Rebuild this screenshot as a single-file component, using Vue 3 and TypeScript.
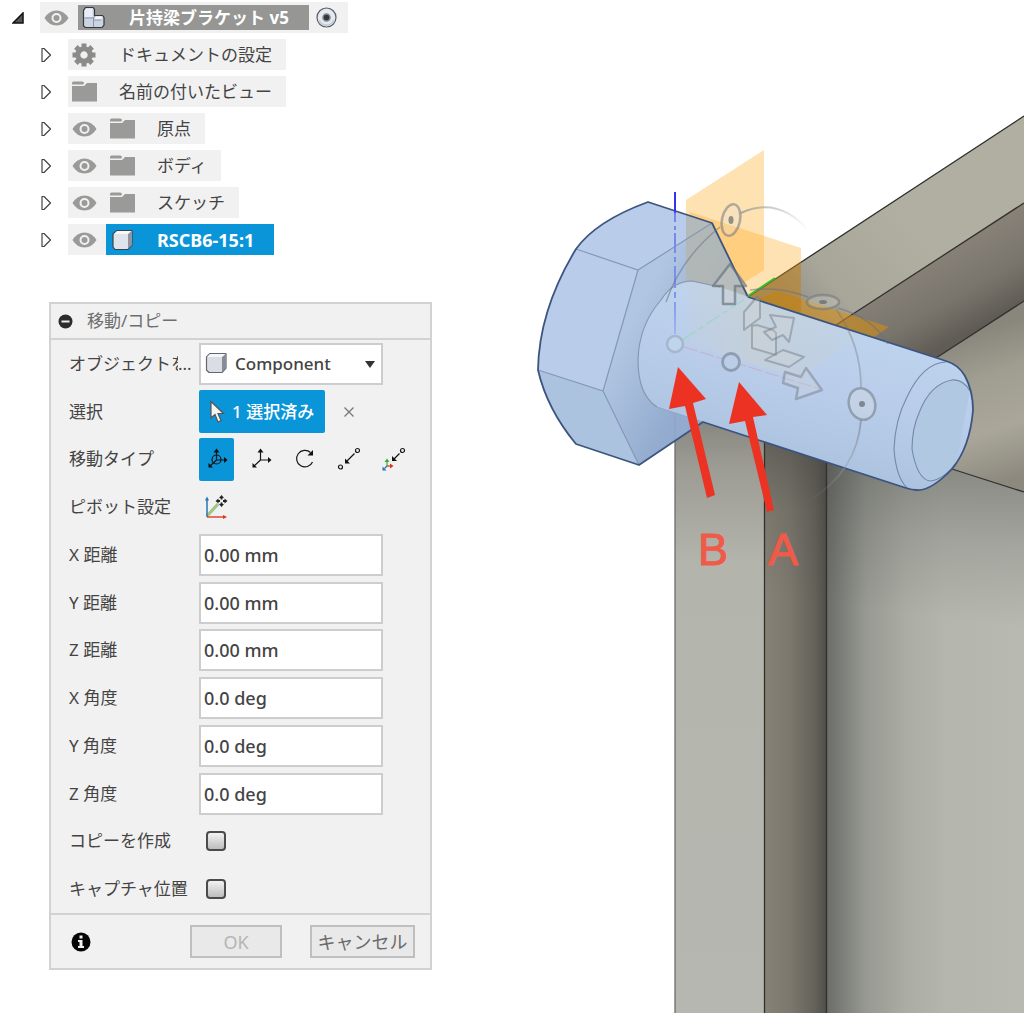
<script setup lang="ts">
import { ref } from 'vue'

type Icon = 'gear' | 'folder' | 'body'

interface TreeNode {
  label: string
  icon: Icon
  eye: boolean
  selected?: boolean
}

interface Field {
  id: string
  label: string
  value: string
}

const nodes: TreeNode[] = [
  { label: 'ドキュメントの設定', icon: 'gear', eye: false },
  { label: '名前の付いたビュー', icon: 'folder', eye: false },
  { label: '原点', icon: 'folder', eye: true },
  { label: 'ボディ', icon: 'folder', eye: true },
  { label: 'スケッチ', icon: 'folder', eye: true },
  { label: 'RSCB6-15:1', icon: 'body', eye: true, selected: true },
]

const fields = ref<Field[]>([
  { id: 'dx', label: 'X 距離', value: '0.00 mm' },
  { id: 'dy', label: 'Y 距離', value: '0.00 mm' },
  { id: 'dz', label: 'Z 距離', value: '0.00 mm' },
  { id: 'ax', label: 'X 角度', value: '0.0 deg' },
  { id: 'ay', label: 'Y 角度', value: '0.0 deg' },
  { id: 'az', label: 'Z 角度', value: '0.0 deg' },
])

const checks = ref([
  { id: 'copy', label: 'コピーを作成', on: false },
  { id: 'capture', label: 'キャプチャ位置', on: false },
])

const moveTypes = ['free', 'translate', 'rotate', 'point', 'position']
const moveType = ref('free')
const teeth = [0, 45, 90, 135, 180, 225, 270, 315]
</script>

<template>
  <main class="workspace">
    <div class="side">
      <nav class="tree">
        <div class="row root">
          <button class="toggle" aria-label="collapse">
            <svg width="12" height="12" viewBox="0 0 12 12"><path d="M11 1V11H1Z" fill="#555" stroke="#111" stroke-width="1.500" /></svg>
          </button>
          <div class="chip">
            <span class="slot">
              <svg width="25" height="18" viewBox="0 0 25 18"><path d="M0.500 9Q5 1.500 12.500 1.500T24.500 9Q20 16.500 12.500 16.500T0.500 9Z" fill="#9a9a99" /><circle cx="12.500" cy="9" r="4" fill="#9a9a99" stroke="#f1f1f1" stroke-width="2" /></svg>
            </span>
            <div class="root-name">
              <span class="slot">
                <svg width="23" height="23" viewBox="0 0 23 23"><path d="M3.500 1.500H11L12.500 3.500V9.500H20.500L22 11.500V19L20 21.500H3.500L1.500 20V4.500Z" fill="#ccd4e3" stroke="#33383f" stroke-width="1.200" /><path d="M2.500 5L4 2.500H10.500V11H2.500Z" fill="#e9edf6" /><path d="M12.500 13.500L14 10.500H20.500L19 13.500Z" fill="#f4f6fb" /><path d="M11.500 12V21M2.500 12H11L13 10M12 14H19" fill="none" stroke="#8c95a6" stroke-width="1" /></svg>
              </span>
              <span class="name">片持梁ブラケット v5</span>
            </div>
            <button class="radio" aria-label="activate">
              <svg width="21" height="21" viewBox="0 0 21 21"><circle cx="10.500" cy="10.500" r="9.500" fill="#e4e8f1" stroke="#5b5e63" stroke-width="1.200" /><path d="M3 13A8 8 0 0 0 18 13" fill="none" stroke="#c5ccda" stroke-width="2" /><circle cx="10.500" cy="10.500" r="3.500" fill="#33363b" stroke="#7f848c" stroke-width="1.500" /></svg>
            </button>
          </div>
        </div>

        <div v-for="n in nodes" :key="n.label" class="row">
          <button class="toggle" aria-label="expand">
            <svg width="12" height="16" viewBox="0 0 12 16"><path d="M2 1.500H4L10.500 8L4 14.500H2Z" fill="#fff" stroke="#444" stroke-width="1.200" stroke-linejoin="round" /></svg>
          </button>
          <div class="chip">
            <span v-if="n.eye" class="slot">
              <svg width="25" height="18" viewBox="0 0 25 18"><path d="M0.500 9Q5 1.500 12.500 1.500T24.500 9Q20 16.500 12.500 16.500T0.500 9Z" fill="#9a9a99" /><circle cx="12.500" cy="9" r="4" fill="#9a9a99" stroke="#f1f1f1" stroke-width="2" /></svg>
            </span>
            <div class="item" :class="{ selected: n.selected }">
              <span class="slot">
                <svg v-if="n.icon === 'gear'" width="24" height="24" viewBox="-12 -12 24 24">
                  <rect v-for="a in teeth" :key="a" x="-2.500" y="-11.500" width="5" height="6" fill="#8b8b8a" :transform="`rotate(${a})`" />
                  <circle r="6.200" fill="none" stroke="#8b8b8a" stroke-width="5" />
                </svg>
                <svg v-else-if="n.icon === 'folder'" width="25" height="21" viewBox="0 0 25 21"><path d="M0 2Q0 0.500 1.500 0.500H10Q12 0.500 12 2T10.500 3.500H0Z" fill="#9a9a99" /><path d="M0 5H12L15 2H25V20.500H0Z" fill="#9a9a99" /></svg>
                <svg v-else width="25" height="22" viewBox="0 0 25 22"><path d="M7 1.500H22V16L18 20.500H5L3 18V5Z" fill="#dfe3ec" stroke="#3d4248" stroke-width="1.200" stroke-linejoin="round" /><path d="M18 5L22 1.500V16L18 20Z" fill="#8f96a3" /><path d="M4 5L7 2H21L18 5Z" fill="#f7f8fb" /></svg>
              </span>
              <span class="name">{{ n.label }}</span>
            </div>
          </div>
        </div>
      </nav>

      <form class="panel" @submit.prevent>
        <header class="head">
          <svg width="15" height="15" viewBox="0 0 15 15"><circle cx="7.500" cy="7.500" r="7" fill="#2c2c2c" /><rect x="3.500" y="6.500" width="8" height="2" fill="#eee" /></svg>
          <h1>移動/コピー</h1>
        </header>

        <div class="body">
          <div class="line">
            <label class="label cut" for="target"><span class="clip">オブジェクトを</span><span>...</span></label>
            <div class="select">
              <select id="target"><option>Component</option></select>
              <svg class="select-icon" width="23" height="22" viewBox="0 0 23 22"><path d="M5 1.500H21V16L17 20.500H4L1.500 18V5Z" fill="#dadde3" stroke="#63676e" stroke-width="1.200" stroke-linejoin="round" /><path d="M17 5L21 1.500V16L17 20Z" fill="#878d97" /><path d="M2 5L5 2H20L17 5Z" fill="#f5f6f8" /></svg>
              <svg class="select-arrow" width="10" height="8" viewBox="0 0 10 8"><path d="M0 1H10L5 8Z" fill="#333" /></svg>
            </div>
          </div>

          <div class="line">
            <span class="label">選択</span>
            <button class="picked" type="button">
              <svg width="17" height="24" viewBox="0 0 17 24"><path d="M2 1.500V18L6 14.500L9 22L12 20.500L9 13.500H14.500Z" fill="#f4f4f4" stroke="#555" stroke-width="1.200" /></svg>
              <span>1 選択済み</span>
            </button>
            <button class="clear" type="button" aria-label="clear">
              <svg width="12" height="12" viewBox="0 0 12 12"><path d="M1.500 1.500L10.500 10.500M10.500 1.500L1.500 10.500" stroke="#777" stroke-width="1.300" /></svg>
            </button>
          </div>

          <div class="line">
            <span class="label">移動タイプ</span>
            <div class="types">
              <button v-for="t in moveTypes" :key="t" type="button" class="type" :class="{ on: t === moveType }" :aria-label="t" @click="moveType = t">
                <svg width="26" height="26" viewBox="0 0 26 26" fill="none" stroke="#161616" stroke-width="1.200">
                  <template v-if="t === 'free' || t === 'translate'">
                    <path d="M12.500 14V5M12.500 14H20M12.500 14L6 20" />
                    <path d="M12.500 2.500L15.500 6.500H9.500ZM23.500 14L20 11V17ZM4.500 17V21.500H9Z" fill="#111" stroke="none" />
                    <circle v-if="t === 'free'" cx="12.500" cy="13.500" r="4.500" />
                  </template>
                  <template v-else-if="t === 'rotate'">
                    <path d="M18.500 6.500A8.300 8.300 0 1 0 20.500 16" />
                    <path d="M21 4V9.500H15.500Z" fill="#111" stroke="none" />
                  </template>
                  <template v-else-if="t === 'point'">
                    <circle cx="21.500" cy="4.500" r="2" /><circle cx="4.500" cy="21" r="2" />
                    <path d="M18.500 7.500L11 15" /><path d="M9 12.500V17.500H14Z" fill="#111" stroke="none" />
                  </template>
                  <template v-else>
                    <circle cx="22.500" cy="4.500" r="2" /><path d="M19.500 7.500L14 13" />
                    <path d="M12 10V15H17Z" fill="#111" stroke="none" />
                    <path d="M7 20V15" stroke="#39b034" /><path d="M7 12.500L9.500 16H4.500Z" fill="#39b034" stroke="none" />
                    <path d="M7 20H11" stroke="#e0311f" /><path d="M13.500 20L10 17.500V22.500Z" fill="#e0311f" stroke="none" />
                    <path d="M7 20L4.500 22.500" stroke="#2774b5" /><path d="M2.500 20.500V24.500H6.500Z" fill="#2774b5" stroke="none" />
                  </template>
                </svg>
              </button>
            </div>
          </div>

          <div class="line">
            <span class="label">ピボット設定</span>
            <button class="pivot" type="button" aria-label="pivot">
              <svg width="26" height="26" viewBox="0 0 26 26" fill="none">
                <path d="M4 22L15 10" stroke="#aaa" stroke-width="3" /><path d="M4 22L15 10" stroke="#8ce05c" stroke-width="1.500" />
                <path d="M4 23V6" stroke="#2774b5" stroke-width="1.500" /><path d="M4 2.500L6 6.500H2Z" fill="#2774b5" />
                <path d="M4 23H20" stroke="#d94a35" stroke-width="1.500" /><path d="M24 23L20 21V25Z" fill="#e0311f" />
                <path d="M18.500 1L21 4H19.500V5.500H17.500V4H16ZM18.500 13L21 10H19.500V8.500H17.500V10H16ZM12.500 7L15.500 4.500V6H17V8H15.500V9.500ZM24.500 7L21.500 4.500V6H20V8H21.500V9.500Z" fill="#222" />
              </svg>
            </button>
          </div>

          <div v-for="f in fields" :key="f.id" class="line">
            <label class="label" :for="f.id">{{ f.label }}</label>
            <input :id="f.id" v-model="f.value" class="value" type="text">
          </div>

          <div v-for="c in checks" :key="c.id" class="line">
            <label class="label" :for="c.id">{{ c.label }}</label>
            <input :id="c.id" v-model="c.on" class="check" type="checkbox">
          </div>
        </div>

        <footer class="foot">
          <svg width="20" height="20" viewBox="0 0 20 20"><circle cx="10" cy="10" r="9.500" fill="#050505" /><path d="M8.500 3.500H11.500V6.500H8.500ZM7 8H11.500V14H13V16H7V14H8.500V10H7Z" fill="#f1f1f1" /></svg>
          <button class="ok" type="button" disabled>OK</button>
          <button class="cancel" type="button">キャンセル</button>
        </footer>
      </form>
    </div>

    <svg class="canvas" viewBox="532 0 492 1013">
      <defs>
        <linearGradient id="post" x1="0" y1="420" x2="0" y2="1013" gradientUnits="userSpaceOnUse">
          <stop offset="0" stop-color="#88877f" /><stop offset=".08" stop-color="#9c9c94" /><stop offset=".24" stop-color="#b3b4ac" /><stop offset="1" stop-color="#b6b7b0" />
        </linearGradient>
        <linearGradient id="inner">
          <stop offset="0" stop-color="#878276" /><stop offset=".4" stop-color="#7c786e" /><stop offset=".8" stop-color="#65625a" /><stop offset="1" stop-color="#4f4e49" />
        </linearGradient>
        <linearGradient id="wall" x1="827" x2="1024" y1="0" y2="0" gradientUnits="userSpaceOnUse">
          <stop offset="0" stop-color="#6c6d69" /><stop offset=".08" stop-color="#7d7f7a" /><stop offset=".2" stop-color="#979992" /><stop offset=".4" stop-color="#abaca4" /><stop offset=".6" stop-color="#b4b5ad" /><stop offset="1" stop-color="#b8b9b1" />
        </linearGradient>
        <linearGradient id="shade" x1="0" y1="420" x2="0" y2="600" gradientUnits="userSpaceOnUse">
          <stop offset="0" stop-color="#3f403d" stop-opacity=".6" /><stop offset=".5" stop-color="#3f403d" stop-opacity=".15" /><stop offset="1" stop-color="#3f403d" stop-opacity="0" />
        </linearGradient>
        <linearGradient id="wallshade" x1="890" y1="450" x2="870" y2="610" gradientUnits="userSpaceOnUse">
          <stop offset="0" stop-color="#3f403d" stop-opacity=".4" /><stop offset=".5" stop-color="#3f403d" stop-opacity=".16" /><stop offset="1" stop-color="#3f403d" stop-opacity="0" />
        </linearGradient>
        <linearGradient id="top" x1="790" y1="300" x2="900" y2="210" gradientUnits="userSpaceOnUse">
          <stop offset="0" stop-color="#96938a" /><stop offset=".3" stop-color="#a8a699" /><stop offset="1" stop-color="#b1afa2" />
        </linearGradient>
        <linearGradient id="under" x1="900" y1="265" x2="945" y2="345" gradientUnits="userSpaceOnUse">
          <stop offset="0" stop-color="#8a847b" /><stop offset=".6" stop-color="#7a756c" /><stop offset="1" stop-color="#605c55" />
        </linearGradient>
        <linearGradient id="back" x1="965" y1="335" x2="1010" y2="480" gradientUnits="userSpaceOnUse">
          <stop offset="0" stop-color="#89867c" /><stop offset=".3" stop-color="#a09d91" /><stop offset=".65" stop-color="#aaa79a" /><stop offset="1" stop-color="#8d897f" />
        </linearGradient>
        <linearGradient id="neck" x1="620" y1="340" x2="695" y2="380" gradientUnits="userSpaceOnUse">
          <stop offset="0" stop-color="#b1c6e2" /><stop offset="1" stop-color="#92abce" />
        </linearGradient>
        <linearGradient id="shaft" x1="830" y1="320" x2="795" y2="455" gradientUnits="userSpaceOnUse">
          <stop offset="0" stop-color="#bed3ec" /><stop offset=".5" stop-color="#b9cdeb" /><stop offset="1" stop-color="#adc4e0" />
        </linearGradient>
        <linearGradient id="haze" x1="690" y1="0" x2="850" y2="0" gradientUnits="userSpaceOnUse">
          <stop offset="0" stop-color="#cdd0c8" stop-opacity=".15" /><stop offset=".4" stop-color="#cdd0c8" stop-opacity=".5" /><stop offset="1" stop-color="#cdd0c8" stop-opacity=".15" />
        </linearGradient>
        <linearGradient id="axis" x1="0" y1="192" x2="0" y2="340" gradientUnits="userSpaceOnUse">
          <stop offset="0" stop-color="#3434ed" /><stop offset=".13" stop-color="#3434ed" /><stop offset=".15" stop-color="#7485ef" /><stop offset=".65" stop-color="#7c8ff0" /><stop offset="1" stop-color="#a5b9f0" />
        </linearGradient>
        <linearGradient id="fade" x1="740" y1="205" x2="808" y2="230" gradientUnits="userSpaceOnUse">
          <stop offset="0" stop-color="#aaa7a0" /><stop offset="1" stop-color="#aaa7a0" stop-opacity="0" />
        </linearGradient>
        <linearGradient id="sweep" x1="0" y1="420" x2="0" y2="502" gradientUnits="userSpaceOnUse">
          <stop offset="0" stop-color="#8e9cb0" /><stop offset="1" stop-color="#9a9a94" stop-opacity="0" />
        </linearGradient>
      </defs>

      <!-- bracket -->
      <path d="M675 415H765V1013H675Z" fill="url(#post)" />
      <path d="M764 430H827V1013H764Z" fill="url(#inner)" />
      <path d="M764 430H827V600H764Z" fill="url(#shade)" />
      <path d="M827 440L952 469L1024 492V1013H827Z" fill="url(#wall)" />
      <path d="M827 440L952 469L1024 492V640H827Z" fill="url(#wallshade)" />
      <path d="M748 297L1024 116V203L836 326Z" fill="url(#top)" />
      <path d="M836 325L1024 203V301L936 358Z" fill="url(#under)" />
      <path d="M936 358L1024 301V492L952 469Z" fill="url(#back)" />
      <path d="M748 297L1024 116M836 325L1024 203M936 358L1024 301M952 469L1024 492M764.500 430V1013M826.500 455V1013" fill="none" stroke="#30302d" stroke-width="1.300" />
      <path d="M675 420V1013" stroke="#6c6d69" stroke-width="1.300" />

      <!-- origin planes behind the bolt -->
      <path d="M686 200L764 150V270L686 320Z" fill="#ffa615" opacity=".33" />
      <path d="M690 212L801 248V360L690 320Z" fill="#ffa615" opacity=".32" />
      <path d="M777 291L889 327L832 365L748 330V304Z" fill="#d88e0c" opacity=".55" />
      <path d="M748 297L801 262V314Z" fill="#97670f" opacity=".3" />

      <!-- bolt -->
      <path d="M648 202L712 223L748 297L946 361Q959 365 965 376Q973 391 973 410Q970 447 952 469Q931 491 917 490Q912 490 906 488L703 422L639 465L576 444Q547 409 538 370Q539 310 576 249Q596 221 648 202Z" fill="#b9cdea" />
      <path d="M638 270L712 223L748 297L703 422L639 465L603 391Z" fill="url(#neck)" />
      <path d="M538 370L603 391L639 465L576 444Q547 409 538 370Z" fill="#acc3df" />
      <path d="M686 205V282L748 297L712 223L686 214Z" fill="#b3b6b0" opacity=".85" />
      <path d="M661 300Q673 281 692 281Q720 286 748 297L946 361Q973 370 973 410Q968 455 940 480Q925 493 906 488L657 407Q638 395 638 360Q639 325 661 300Z" fill="url(#shaft)" />
      <path d="M686 281Q720 284 748 297L862 334L800 378L690 345Z" fill="url(#haze)" />
      <path d="M576 249L638 270L712 223M638 270L603 391M538 370L603 391L639 465" fill="none" stroke="#8598b5" stroke-width="1.200" />
      <path d="M657 407Q638 395 638 360Q639 325 661 300Q673 281 692 281L720 287" fill="none" stroke="#8394ae" stroke-width="1.100" />
      <path d="M657 407L703 422M675 413V441" fill="none" stroke="#8ba0bf" stroke-width="1" opacity=".7" />
      <path d="M946 362Q923 363 907 397Q895 420 894 449Q896 477 907 488" fill="none" stroke="#7388ab" stroke-width="1.100" />
      <path d="M970 391Q963 379 952 380Q930 384 919 413Q912 429 912 449Q917 479 930 481Q943 480 956 463" fill="#b1c8e3" stroke="#7388ab" stroke-width="1.100" />
      <path d="M648 202L712 223L748 297L946 361Q959 365 965 376Q973 391 973 410Q970 447 952 469Q931 491 917 490Q912 490 906 488L703 422L639 465L576 444Q547 409 538 370Q539 310 576 249Q596 221 648 202Z" fill="none" stroke="#3c5480" stroke-width="1.800" stroke-linejoin="round" />

      <!-- axes -->
      <path d="M675 192V222M675 226V230M675 233V253M675 257V262M675 266V288M675 292V298M675 302V334" stroke="url(#axis)" stroke-width="2" fill="none" />
      <path d="M748 296L775 278" stroke="#35c22d" stroke-width="2" />
      <path d="M682 340L748 297" stroke="#a3d5cb" stroke-width="1.500" stroke-dasharray="16 4 5 4" />
      <path d="M684 347L820 389" stroke="#c8b0c2" stroke-width="1" stroke-dasharray="14 3" />

      <!-- move gizmo -->
      <g fill="none" stroke="#66707b" stroke-opacity=".5" stroke-width="2">
        <path d="M741 213Q778 196 808 230" stroke="url(#fade)" stroke-opacity="1" />
        <path d="M720 227Q681 258 666 302" stroke-width="1.500" />
        <path d="M750 290Q780 286 808 297M838 308Q873 318 888 344" stroke-width="1.500" />
        <path d="M836 309Q861 345 861 387" stroke-width="1.800" stroke-opacity=".35" />
        <path d="M861 420Q857 471 810 500" stroke="url(#sweep)" stroke-opacity="1" stroke-width="1.800" />
        <g fill="#e5e3d8" fill-opacity=".25" stroke-width="2.500">
          <ellipse cx="731" cy="220" rx="9" ry="16" transform="rotate(12 731 220)" />
          <ellipse cx="823" cy="302" rx="16" ry="7" />
          <ellipse cx="862" cy="404" rx="13" ry="16" transform="rotate(-18 862 404)" />
        </g>
        <g fill="#d2d5d4" fill-opacity=".25" stroke-opacity=".42" stroke-linejoin="round">
          <path d="M730 264L746 286H735V304H723V286H713Z" stroke-width="2.500" stroke-opacity=".65" />
          <path d="M744 312L757 297L760 299V318L744 330Z" />
          <path d="M752 326L757 325L773 330L776 333V355L752 348Z" />
          <path d="M770 315L794 318L789 342L783 335L772 340L764 332L776 327Z" />
          <path d="M765 360L783 350L804 357L789 367Z" />
          <path d="M822 390L796 399L798 388L783 383L785 372L801 377L806 368Z" stroke-width="2.500" />
        </g>
        <circle cx="675" cy="344" r="8" fill="#c0d4ec" stroke="#a5b6ce" stroke-opacity="1" stroke-width="2.500" />
        <circle cx="731" cy="362" r="8.500" fill="#bbcde7" stroke="#8f9db2" stroke-opacity="1" stroke-width="2.800" />
      </g>
      <g fill="#59626c" opacity=".65">
        <ellipse cx="731" cy="220" rx="2.500" ry="4" /><ellipse cx="823" cy="302" rx="4" ry="2" /><circle cx="862" cy="404" r="3" />
      </g>

      <!-- annotations -->
      <g fill="#ec3323">
        <path d="M678 367L706 399L693 403L715 495L707 498L685 406L669 409Z" />
        <path d="M739 382L767 415L753 417L774 510L767 512L745 421L729 424Z" />
      </g>
      <text class="note" x="698" y="565">B</text>
      <text class="note" x="768" y="565">A</text>
    </svg>
  </main>
</template>

<style>
body {
  margin: 0;
  background: #fff;
}
</style>

<style scoped>
.workspace {
  display: grid;
  grid-template-columns: 532px minmax(0, 1fr);
  align-items: start;
  font-family: "Noto Sans", "Noto Sans CJK JP", sans-serif;
  font-size: 17px;
  line-height: 24px;
  color: #444;
}
button, input, select {
  font: inherit;
  color: inherit;
  margin: 0;
  padding: 0;
  border: 0;
  background: none;
  border-radius: 0;
  box-sizing: border-box;
}
svg {
  display: block;
}
.canvas {
  width: 100%;
  height: auto;
}
.note {
  font-family: "Liberation Sans", sans-serif;
  font-size: 45px;
  fill: #ef5a49;
  stroke: #ef5a49;
  stroke-width: 1px;
}

.tree {
  display: flex;
  flex-direction: column;
  gap: 6px;
  padding-top: 2px;
}
.row {
  display: flex;
  height: 31px;
  padding-left: 40px;
}
.root {
  padding-left: 12px;
}
.toggle {
  width: 28px;
  display: flex;
  align-items: center;
}
.chip {
  display: flex;
  align-items: center;
  background: #f1f1f1;
}
.slot {
  flex: none;
  width: 38px;
  box-sizing: border-box;
  padding-left: 4px;
}
.item {
  display: flex;
  align-items: center;
  height: 31px;
}
.name {
  padding: 0 14px 0 13px;
  white-space: nowrap;
}
.selected {
  background: #0a95d9;
  color: #fff;
  font-weight: 700;
  font-size: 18px;
}
.root-name {
  display: flex;
  align-items: center;
  height: 25px;
  background: #969695;
  color: #fff;
  font-weight: 700;
}
.selected .name, .root-name .name {
  padding-right: 20px;
}
.radio {
  margin: 0 11px 0 7px;
}

.panel {
  width: 383px;
  box-sizing: border-box;
  margin: 47px 0 0 49px;
  border: 2px solid #d2d2d2;
  background: #f1f1f1;
}
.head {
  display: flex;
  align-items: center;
  gap: 14px;
  height: 34px;
  padding-left: 7px;
  border-bottom: 2px solid #d2d2d2;
}
h1 {
  margin: 0;
  font-size: 17px;
  font-weight: 400;
  color: #6e6e6e;
}
.body {
  display: grid;
  grid-auto-rows: 1fr;
  min-height: 573px;
  border-bottom: 2px solid #d2d2d2;
}
.line {
  display: flex;
  align-items: center;
  padding-left: 18px;
}
.label {
  flex: none;
  width: 130px;
  white-space: nowrap;
}
.cut {
  display: flex;
}
.clip {
  width: 109px;
  overflow: hidden;
}
.select {
  position: relative;
  width: 184px;
}
select {
  appearance: none;
  display: block;
  width: 100%;
  height: 42px;
  padding-left: 34px;
  border: 2px solid #cdcdcd;
  background: #fff;
  font-weight: 500;
}
.select-icon, .select-arrow {
  position: absolute;
  pointer-events: none;
  top: 9px;
  left: 6px;
}
.select-arrow {
  top: 17px;
  left: auto;
  right: 8px;
}
.picked {
  display: flex;
  align-items: center;
  gap: 6px;
  width: 126px;
  height: 43px;
  padding-left: 10px;
  border-radius: 2px;
  background: #0a95d9;
  color: #fff;
  font-weight: 500;
  white-space: nowrap;
}
.clear {
  margin-left: 18px;
}
.types {
  display: flex;
  gap: 9px;
}
.type {
  display: grid;
  place-items: center;
  width: 35px;
  height: 43px;
  border-radius: 2px;
}
.on {
  background: #0a95d9;
}
.pivot {
  margin-left: 4px;
}
.value {
  width: 184px;
  height: 42px;
  padding-left: 3px;
  border: 2px solid #cdcdcd;
  background: #fff;
  font-size: 18px;
  font-weight: 500;
}
.check {
  appearance: none;
  width: 20px;
  height: 20px;
  margin-left: 7px;
  border: 2px solid #4b4b4b;
  border-radius: 4px;
  background: linear-gradient(#f2f2f2, #bdbdbd);
}
.foot {
  display: flex;
  align-items: center;
  height: 53px;
  padding: 0 15px 0 20px;
  font-size: 18px;
}
.ok, .cancel {
  height: 33px;
  border: 2px solid #bfbfbf;
  background: #e9e9e9;
}
.ok {
  width: 92px;
  margin-left: auto;
  color: #b5b5b5;
}
.cancel {
  width: 105px;
  margin-left: 28px;
  color: #6c6c6c;
  white-space: nowrap;
}
</style>
